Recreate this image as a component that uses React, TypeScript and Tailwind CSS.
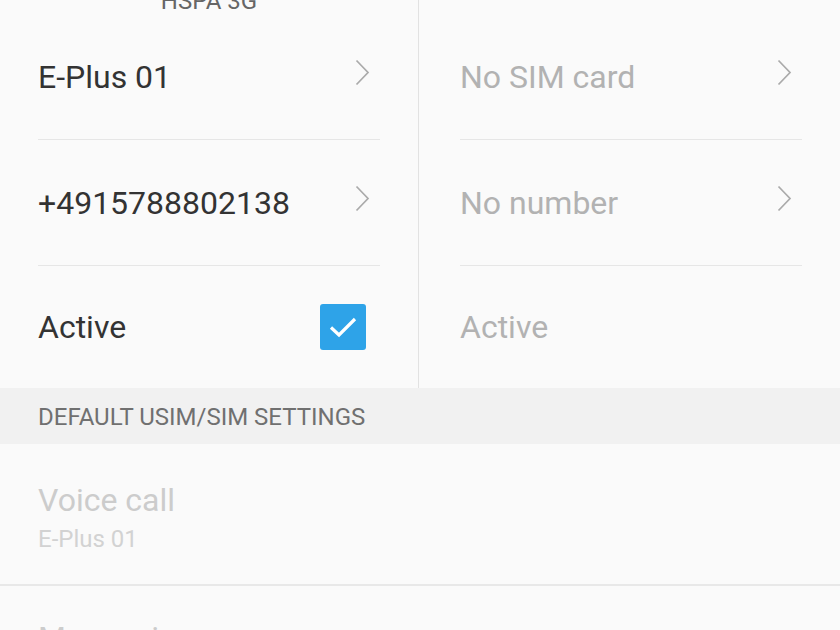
const Chevron: React.FC = () => (
  <svg width="15" height="27" viewBox="0 0 15 27" className="mr-[10px] mb-[9px] shrink-0">
    <polyline points="1.5,1.5 13,13.5 1.5,25.5" fill="none" stroke="#aaaaaa" strokeWidth="1.7" />
  </svg>
);

const Row: React.FC<{ label: string; muted?: boolean; last?: boolean; children?: React.ReactNode }> = ({
  label,
  muted,
  last,
  children,
}) => (
  <div className={`flex items-center justify-between ${last ? "h-[122px]" : "h-[126px] border-b border-[#e6e6e6]"}`}>
    <span className={`text-[32px] leading-none ${muted ? "text-[#b2b2b2]" : "text-[#333333]"}`}>{label}</span>
    {children}
  </div>
);

export default function App() {
  return (
    <div className="w-[840px] h-[630px] overflow-hidden bg-[#fafafa] font-['Roboto',sans-serif]">
      <div className="flex">
        <div className="w-[418px] shrink-0">
          <div className="h-[14px] overflow-hidden flex justify-center">
            <span className="text-[24px] leading-none text-[#666666] -mt-[11px]">HSPA 3G</span>
          </div>
          <div className="pl-[38px] pr-[38px]">
            <Row label="E-Plus 01">
              <Chevron />
            </Row>
            <Row label="+4915788802138">
              <Chevron />
            </Row>
            <Row label="Active" last>
              <div className="w-[46px] h-[46px] mr-[14px] rounded-[3px] bg-[#2ea3e8] flex items-center justify-center">
                <svg width="30" height="24" viewBox="0 0 30 24">
                  <polyline points="3,12.5 11,20 27,4" fill="none" stroke="#ffffff" strokeWidth="3.2" />
                </svg>
              </div>
            </Row>
          </div>
        </div>
        <div className="w-px bg-[#e2e2e2]" />
        <div className="flex-1 pt-[14px] pl-[41px] pr-[38px]">
          <Row label="No SIM card" muted>
            <Chevron />
          </Row>
          <Row label="No number" muted>
            <Chevron />
          </Row>
          <Row label="Active" muted last />
        </div>
      </div>
      <div className="h-[56px] bg-[#f1f1f1] flex items-center pl-[38px]">
        <span className="text-[24px] leading-none text-[#707070] mt-[2px]">DEFAULT USIM/SIM SETTINGS</span>
      </div>
      <div className="h-[142px] pl-[38px] pt-[40px] border-b-2 border-[#e8e8e8]">
        <div className="text-[32px] leading-none text-[#cccccc]">Voice call</div>
        <div className="mt-[11px] text-[24px] leading-none text-[#d2d2d2]">E-Plus 01</div>
      </div>
      <div className="pl-[38px] pt-[36px]">
        <div className="text-[32px] leading-none text-[#cccccc]">Messaging</div>
      </div>
    </div>
  );
}
